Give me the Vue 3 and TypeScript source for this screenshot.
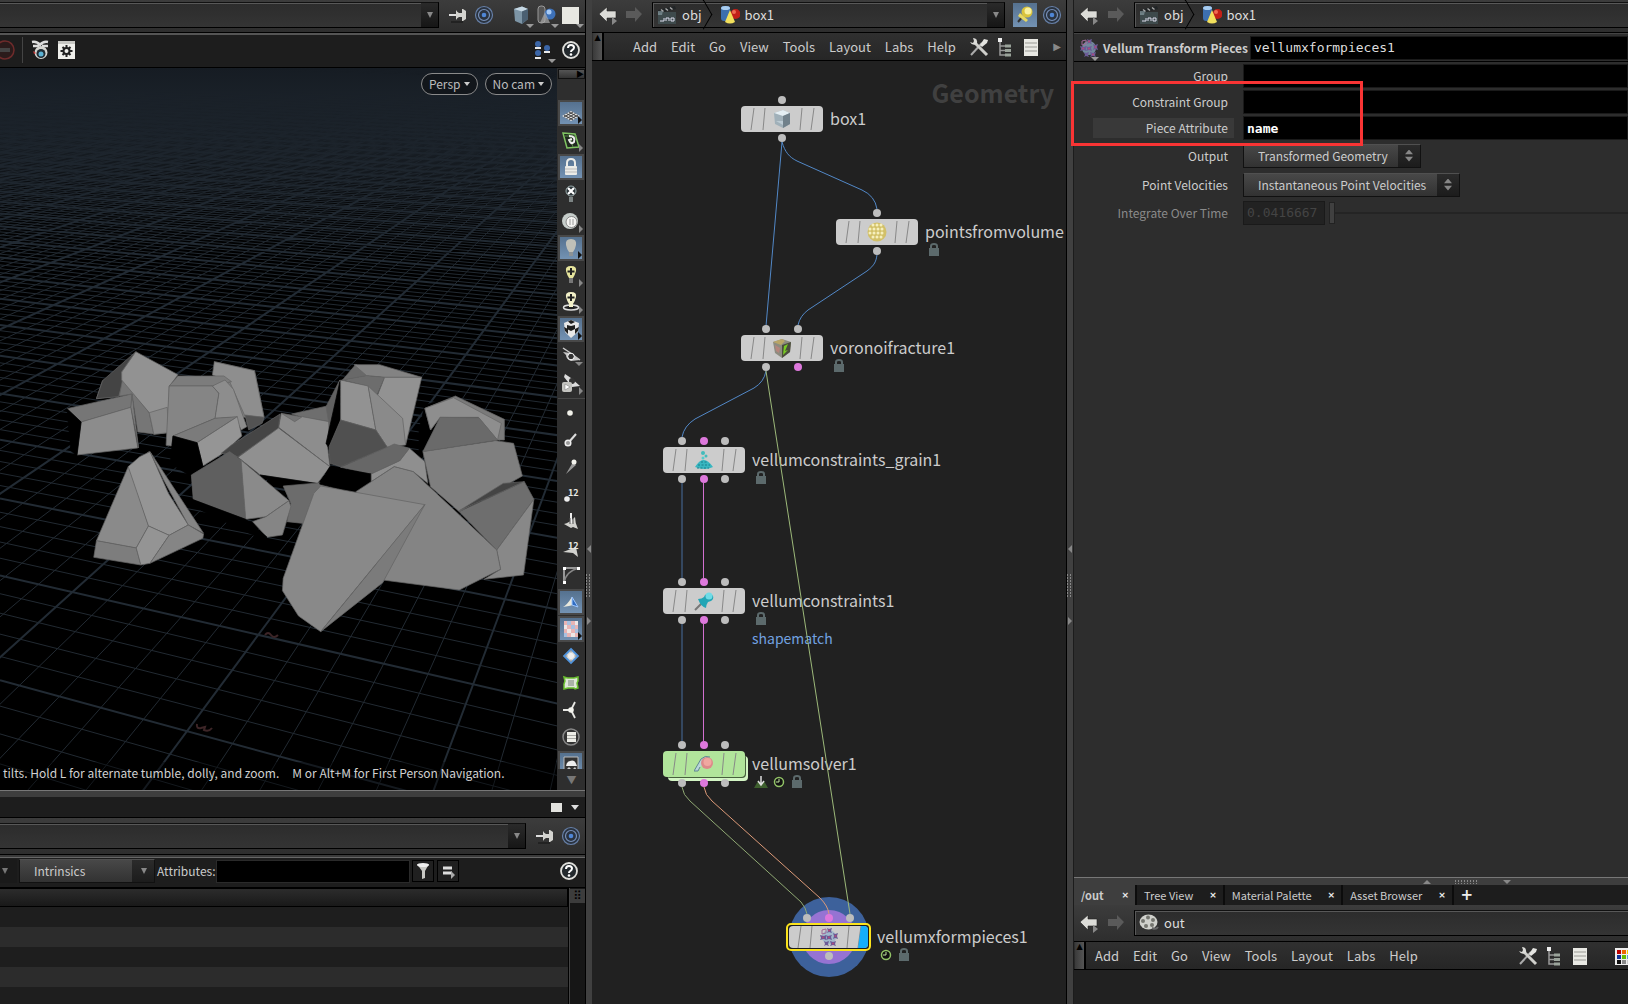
<script setup lang="ts">
import { ref } from 'vue'

interface Tool { icon: string; active?: boolean; more?: 'side' | 'down'; label: string }
interface Port { x: number; y: number; pink?: boolean }
interface NetNode {
  name: string; x: number; y: number; icon: string
  ports: Port[]; badges: string[]; fill?: string; display?: boolean
}

const icons: Record<string, string> = {
  back: '<path d="M1 9 9 2v4h9v7H9v4z" fill="#dcdcd8" stroke="#222" stroke-width=".6"/><path d="m14 12 5 4-5 4z" fill="#888"/>',
  forward: '<path d="M17 9 10 2v4H1v7h9v4z" fill="#5a5a5a"/>',
  clap: '<rect x="1" y="7" width="18" height="12" fill="#3e4a4c"/><path d="m1 5 17-4 1 3L2 8z" fill="#202426"/><path d="m4 4.500 2.500 2M8.500 3.500l2.500 2M13 2.500l2.500 2" stroke="#aaa" stroke-width="1.500"/><path d="M3 16h4v-3M9 16v-3h3v3M14 13h3v3h-3z" stroke="#dde" fill="none"/><path d="M1 6h5l-1 4H1z" fill="#91a6ad" opacity=".6"/>',
  shapes: '<rect x="1" y="1" width="9" height="15" rx="3" fill="#3d6fae"/><ellipse cx="5.500" cy="3" rx="4.500" ry="2" fill="#a9cdf0"/><circle cx="15.500" cy="9" r="5" fill="#c22018"/><circle cx="14" cy="7" r="2" fill="#ee6a52"/><path d="m10 5 5 12q-5 3-10 0z" fill="#f2e05c"/>',
  target: '<circle cx="10" cy="10" r="8.500" fill="#2a3340" stroke="#6780a8" stroke-width="1.200"/><circle cx="10" cy="10" r="5.500" fill="none" stroke="#7890b8" stroke-width="1.200"/><circle cx="10" cy="10" r="2.300" fill="#4f86d6"/>',
  pin: '<path d="M1 10h8" stroke="#ddd" stroke-width="2"/><path d="M8 5q1 2 3 3h3V4h1l3 2v8l-3 2h-1v-4h-3q-2 1-3 3z" fill="#d4d4d0"/><path d="M3 17h12" stroke="#222" stroke-width="2"/>',
  goldpin: '<path d="m3 17 5-6" stroke="#333" stroke-width="2"/><circle cx="12" cy="7" r="5.500" fill="#d9c33c"/><circle cx="13" cy="6" r="3.500" fill="#f8f0a0"/><path d="m5 8 8 7-2 2-8-6z" fill="#e8d860"/>',
  cube: '<path d="m3 4 8-2.500L17 4v10l-6 5-7-3z" fill="#7d95a6"/><path d="m3 4 8-2.500L17 4l-6 2.500z" fill="#c6d8e4"/><path d="m11 6.500 6-2.500v10l-6 5z" fill="#4b6072"/>',
  shade: '<rect x="2" y="1" width="7" height="17" rx="3" fill="#555" stroke="#999"/><circle cx="14" cy="9" r="5.500" fill="#3d71b8"/><circle cx="13" cy="7" r="2.500" fill="#a8cbf5"/><path d="m9 7 5 11H4z" fill="#aaa" opacity=".7"/>',
  white: '<path d="M1 2h17v17H1z" fill="#e8e8e2"/>',
  stop: '<circle cx="10" cy="10" r="9" fill="#2b1b1b" stroke="#6e2b2b" stroke-width="1.500"/><rect x="5" y="8" width="10" height="4" fill="#444"/>',
  bee: '<path d="M1 2q5-1 8 3 3-4 8-3M2 6h6M11 6h6" stroke="#ddd" stroke-width="2.500" fill="none"/><circle cx="10" cy="12.500" r="6.500" fill="#d6d6d2"/><circle cx="10" cy="13.500" r="4.500" fill="#202c33"/><circle cx="10" cy="14" r="2.500" fill="#5cb2d4"/><path d="m2 11 3 2-2 1z" fill="#c33"/>',
  gear: '<rect x="1" y="1" width="17" height="18" fill="#f0f0ec"/><rect x="1" y="1" width="17" height="3" fill="#c8c8c4"/><circle cx="9.500" cy="11" r="3" fill="none" stroke="#222" stroke-width="2"/><path d="M9.500 5v3M9.500 14v3M3.500 11h3M12.500 11h3M5.500 7l2 2M11.500 13l2 2M13.500 7l-2 2M7.500 13l-2 2" stroke="#222" stroke-width="2"/>',
  people: '<g fill="#3b66a8"><circle cx="5" cy="4" r="3"/><circle cx="14" cy="8" r="3"/><circle cx="5" cy="13" r="3"/></g><path d="M2 8h6M11 12h6M2 18h6" stroke="#e8e8e8" stroke-width="2"/>',
  help: '<circle cx="10" cy="10" r="8" fill="#23292d" stroke="#e0e0dc" stroke-width="1.800"/><path d="M7 8q0-3 3-3t3 2.500q0 1.500-1.500 2.300T10 12" fill="none" stroke="#fff" stroke-width="2"/><circle cx="10" cy="14.500" r="1.300" fill="#fff"/>',
  tools: '<path d="M2 18 13 6" stroke="#aaa" stroke-width="2"/><path d="m11 8 4-6 4 1-1 3-5 4z" fill="#e4e4e0"/><path d="m6 6 12 12" stroke="#cfcfcb" stroke-width="3"/><path d="M4 1q5 0 4 6-5 2-7-2l3 1 1-2z" fill="#dcdcd8"/>',
  tree: '<rect x="3" y="1" width="4" height="4" fill="#eee"/><path d="M5 5v13h5M5 9h5M5 13.500h5" stroke="#999" fill="none" stroke-width="1.500"/><path d="M10 9h6M10 13.500h6M10 18h6" stroke="#9aa39a" stroke-width="3"/>',
  list: '<rect x="3" y="2" width="14" height="17" fill="#e9e9e4"/><path d="M4 6h12M4 10h12M4 14h12" stroke="#b4b4ae" stroke-width="1.500"/>',
  palette: '<rect x="1" y="2" width="18" height="17" fill="#eee"/><path d="M3 4h4v4H3z" fill="#b00"/><path d="M8 4h4v4H8z" fill="#e60"/><path d="M13 4h4v4h-4z" fill="#ec0"/><path d="M3 9h4v4H3z" fill="#139"/><path d="M8 9h4v4H8z" fill="#6b0"/><path d="M13 9h4v4h-4z" fill="#69c"/><path d="M3 14h4v4H3z" fill="#111"/><path d="M8 14h4v4H8z" fill="#888"/><path d="M13 14h4v4h-4z" fill="#ccc"/>',
  reel: '<ellipse cx="9.500" cy="9" rx="9" ry="7.500" fill="#cfd0cb"/><g fill="#74756f"><circle cx="9" cy="4.500" r="2"/><circle cx="14" cy="7" r="2"/><circle cx="13" cy="12" r="2"/><circle cx="7" cy="13" r="2"/><circle cx="4" cy="8" r="2"/></g><path d="M13 15q4 2 6-1" stroke="#666" stroke-width="2" fill="none"/>',
  filter: '<path d="M4 3h12l-4 7v7l-3 1v-8z" fill="#c8c8c4"/><ellipse cx="10" cy="4" rx="6" ry="2" fill="#eee"/>',
  menu: '<path d="M5 7h9M5 12h9" stroke="#ddd" stroke-width="3"/><path d="m13 10 4 4-4 4z" fill="#aaa"/>',
  pieces: '<circle cx="10" cy="10" r="7" fill="#8fb0cc" opacity=".7"/><g fill="#6c5a96"><path d="m1 8 4 1 2-1v5l-2-1-4 1 1-2zM8 1l2 1 3-1-1 3 1 2-3-1-2 1 1-2zM14 6l2 1 3-1-1 3 1 3-3-1-2 1 1-3zM7 8l2 1 4-1-1 2 1 3-3-1-3 1 1-2zM5 14l2 1 3-1-1 3 1 2-3-1-2 1 1-2zM11 14l3 1 3-1-1 3 1 2-3-1-3 1 1-2z"/></g><path d="m3 3 4-1v4l-4 1z" fill="none" stroke="#a06a98"/><g fill="#b44a7a"><circle cx="10" cy="3.500" r="1"/><circle cx="16.500" cy="9" r="1"/><circle cx="14" cy="16.500" r="1"/><circle cx="4" cy="10.500" r="1"/><circle cx="10" cy="10.500" r="1"/></g>',
  // network node pictograms
  nbox: '<path d="m2 4 9-3 7 3v11l-7 4-8-4z" fill="#a0b0b9"/><path d="m2 4 9-3 7 3-7 3z" fill="#e4eef3"/><path d="m11 7 7-3v11l-7 4z" fill="#71818b"/><path d="M4 12h7v4z" fill="#bccbd4"/>',
  npoints: '<circle cx="10" cy="10" r="9.500" fill="#d2c068"/><g fill="#f6efbd"><circle cx="6" cy="3" r="1.500"/><circle cx="10" cy="3" r="1.500"/><circle cx="14" cy="3" r="1.500"/><circle cx="3" cy="7" r="1.500"/><circle cx="7" cy="7" r="1.500"/><circle cx="11" cy="7" r="1.500"/><circle cx="15" cy="7" r="1.500"/><circle cx="3" cy="11" r="1.500"/><circle cx="7" cy="11" r="1.500"/><circle cx="11" cy="11" r="1.500"/><circle cx="15" cy="11" r="1.500"/><circle cx="6" cy="15" r="1.500"/><circle cx="10" cy="15" r="1.500"/><circle cx="14" cy="15" r="1.500"/></g>',
  nvoro: '<path d="m1 4 9-3 9 3-1 10-8 6-7-5z" fill="#8d8c80"/><path d="m1 4 9-3 3 2-4 4z" fill="#b9a667"/><path d="m10 7 9-3-1 10-8 6z" fill="#4b4d3c"/><path d="m12 8 4-2-3 7 3-1-5 5z" fill="#77cc22"/><path d="m3 7 5 3-1 5-3-2z" fill="#b5857c"/>',
  ngrain: '<path d="M1 17Q6 9 10 10q4 0 9 7-8 4-18 0z" fill="#38b6c0"/><path d="M4 15h12M7 12h6M3 18h12" stroke="#1a7f8c" stroke-dasharray="2 1.500"/><circle cx="9" cy="3" r="2" fill="#4bb"/><circle cx="12" cy="6" r="1.500" fill="#4bb"/><circle cx="9" cy="8" r="1.500" fill="#5cc"/>',
  npin: '<path d="m1 19 7-7" stroke="#777" stroke-width="2"/><path d="M4 8q4 0 6-2l1-2q5-4 8 1 1 3-2 5l-3 1q-2 3-2 6-5-1-8-9z" fill="#22a5b5"/><circle cx="15" cy="5" r="3.500" fill="#6fdbe6"/>',
  nsolver: '<path d="m0 17 7-12q4-4 8-1l-9 9-2 4z" fill="#b9d6da"/><circle cx="13" cy="9" r="6" fill="#dd8a8a"/><circle cx="13.500" cy="8" r="4" fill="#f0a8a0"/><path d="m0 17 7-12q4-4 9-2M6 13l-2 4H0" fill="none" stroke="#5f8791"/>',
  // display option pictograms
  plane: '<path d="m10 8 9 5-9 5-9-5z" fill="#ddd"/><path d="m5.500 10.500 9 5M14.500 10.500l-9 5M3 12l9 5M8 9l9 5M17 12l-9 5M12 9l-9 5" stroke="#444"/>',
  uv: '<path d="m2 3 12 1 4 13-12 1z" fill="#202820" stroke="#7fc462" stroke-width="1.500"/><path d="M4 6h12M8 4l4 13" stroke="#598846"/><path d="M8 6q7 0 5 6-3 3-5-2l3-1" fill="none" stroke="#eee" stroke-width="2"/>',
  lock: '<path d="M6 9V6q0-4 4-4t4 4v3" fill="none" stroke="#ecece8" stroke-width="2"/><rect x="4" y="9" width="12" height="9" rx="1" fill="#ecece8"/><path d="M4 12h12M4 15h12" stroke="#bbb"/>',
  bulbx: '<circle cx="10" cy="7" r="5" fill="#2c3438" stroke="#9aa"/><path d="m7 4 6 6M13 4l-6 6" stroke="#fff" stroke-width="2.200"/><path d="M8 13h4v5H8z" fill="#7c8484"/>',
  sphere: '<circle cx="9" cy="10" r="8" fill="#c6cdca"/><circle cx="10.500" cy="11" r="5.500" fill="#f4f4f2" stroke="#888"/><path d="M9 8v6M12 8v6" stroke="#999"/>',
  bulb: '<path d="M10 1q6 0 5 6-1 5-3 7H8Q6 12 5 7 4 1 10 1z" fill="#bfc0b8"/><path d="M8 14h4v4H8z" fill="#8b9296"/>',
  bulby: '<path d="M10 1q6 0 5 5-1 4-3 7H8Q6 10 5 6 4 1 10 1z" fill="#e6e49c"/><path d="M10 3v7M6.500 6.500h7" stroke="#222" stroke-width="2"/><path d="M8 13h4v5H8z" fill="#777"/>',
  bulbd: '<ellipse cx="10" cy="15.500" rx="7.500" ry="2.500" fill="#222" stroke="#ddd" stroke-width="1.500"/><path d="M10 0q6 0 5 5-1 4-3 7v3H8v-3Q6 9 5 5 4 0 10 0z" fill="#f2f0c8"/><path d="M10 2v7M6.500 5.500h7" stroke="#222" stroke-width="2"/>',
  checker: '<path d="m3 4 7-3 8 3-1 9-7 6-6-6z" fill="#e8e8e8"/><path d="m7 2.500 3-1.500 4 2-4 2zM3 8l4 2v5l-3-3zM10 7l4-1v4l-4 2zM6 6l4 1v5l-4-2zM14 10l4-2-1 4-3 3z" fill="#1e1e1e"/>',
  goggles: '<path d="m2 2 6 4 11 8" stroke="#ccc" stroke-width="1.500" fill="none"/><path d="m2 6 7 1 10 7-9 1q-5-2-5-6z" fill="#c8c8c8"/><circle cx="10" cy="10.500" r="3.300" fill="#333" stroke="#fff"/>',
  gogbox: '<path d="m4 1 6 4 9 8-8 1q-4-2-4-5L3 4z" fill="#ddd"/><circle cx="11" cy="8" r="3" fill="#333"/><rect x="1" y="9" width="10" height="10" rx="2" fill="#c4c4c0"/><path d="m4 11 5 3-5 3z" fill="#fff" stroke="#777" stroke-width=".5"/>',
  dot: '<circle cx="9" cy="10" r="2.800" fill="#f2f2ea"/>',
  dotline: '<path d="m8 12 7-8" stroke="#ddd" stroke-width="2"/><circle cx="7" cy="13" r="2.800" fill="#999" stroke="#eee" stroke-width="1.500"/>',
  dotvec: '<path d="m5 17 7-12 3 3z" fill="#999"/><circle cx="13" cy="5" r="2.500" fill="#f4f4ee"/>',
  ptnum: '<circle cx="6" cy="15" r="2.800" fill="#eee"/><text x="7" y="12" font-size="9" font-weight="700" fill="#e8e8e4">12</text>',
  prim: '<path d="M3 13q5-1 11-7 0 6 3 12l-5-2-2 1z" fill="#d2d2ce"/><path d="M10 2v10" stroke="#eee" stroke-width="2"/><path d="M9 7v6M12 7v6" stroke="#555"/>',
  primnum: '<path d="m2 14 13-5 2 10-5-4z" fill="#d2d2ce"/><text x="7" y="11" font-size="9" font-weight="700" fill="#e8e8e4">12</text>',
  hull: '<path d="M3 18V3h15" fill="none" stroke="#bbb" stroke-width="1.500"/><path d="M3 18Q5 6 18 3" fill="none" stroke="#888" stroke-width="1.500"/><path d="M2 2h3v3H2zM16 2h3v3h-3zM2 16h3v3H2z" fill="#fff"/>',
  facet: '<path d="M2 15q4-2 9-10l1 8-4 1z" fill="#e8e8dc"/><path d="m11 5 6 10-6-2z" fill="#2f6cc0" stroke="#9cc6ff"/>',
  checks: '<path d="M3 2h14v16H3z" fill="#ece6e6"/><path d="M3 2h3v4H3zM10 2h4v4h-4zM6 6h4v4H6zM14 6h3v4h-3zM3 10h3v4H3zM10 10h4v4h-4zM6 14h4v4H6zM14 14h3v4h-3z" fill="#e8b4b4"/><path d="M6 2h4v4H6zM10 6h4v4h-4zM14 10h3v4h-3zM3 14h3v4H3z" fill="#a8c0e0"/>',
  diamond: '<path d="m10 3 7 7-7 7-7-7z" fill="#d6d6d0" stroke="#4f93dd" stroke-width="1.800"/><path d="M10 4v12M4 10h12" stroke="#888"/><path d="m10 6 4 4-4 4-4-4z" fill="#eee"/>',
  patch: '<path d="M3 4q3 1 4 1h6l4-1v4l-1 2 1 5-3 1-1-1H7l-4 1v-5l1-3z" fill="#dfe6d8" stroke="#6abf2f" stroke-width="1.500"/><path d="M7 7h6v6H7z" fill="#aab2a8"/>',
  axes: '<path d="M2 10h7M10 10l4-8M10 10l4 8" stroke="#e8e8e4" stroke-width="1.800"/><circle cx="10" cy="10" r="2.800" fill="#f4f4ee"/>',
  ring: '<circle cx="10" cy="10" r="8" fill="#333" stroke="#888" stroke-width="1.500"/><rect x="6" y="5" width="9" height="10" fill="#ecece6"/><path d="M6 8.500h9M6 11.500h9" stroke="#a8a8a4"/>',
  image: '<path d="M3 3h14v15H3z" fill="#333" stroke="#bbb"/><path d="M5 12q1-5 4-5 5-2 7 5z" fill="#eee"/><path d="m3 18 5-5 3 3 3-3 3 5z" fill="#ccc"/>',
}

const tools: Tool[] = [
  { icon: 'plane', active: true, more: 'side', label: 'Reference plane' },
  { icon: 'uv', more: 'side', label: 'Construction plane' },
  { icon: 'lock', active: true, label: 'Lock camera' },
  { icon: 'bulbx', label: 'Disable lighting' },
  { icon: 'sphere', more: 'side', label: 'Headlight only' },
  { icon: 'bulb', active: true, more: 'side', label: 'Normal lighting' },
  { icon: 'bulby', more: 'side', label: 'High quality lighting' },
  { icon: 'bulbd', more: 'side', label: 'High quality lighting with shadows' },
  { icon: 'checker', active: true, more: 'side', label: 'Materials' },
  { icon: 'goggles', more: 'down', label: 'Display other objects' },
  { icon: 'gogbox', more: 'side', label: 'Ghost other objects' },
]
const tools2: Tool[] = [
  { icon: 'dot', label: 'Points' },
  { icon: 'dotline', label: 'Point normals' },
  { icon: 'dotvec', label: 'Point trails' },
  { icon: 'ptnum', label: 'Point numbers' },
  { icon: 'prim', label: 'Primitive normals' },
  { icon: 'primnum', label: 'Primitive numbers' },
  { icon: 'hull', label: 'Primitive hulls' },
  { icon: 'facet', active: true, label: 'Shade open curves' },
  { icon: 'checks', active: true, more: 'side', label: 'Backfaces' },
  { icon: 'diamond', label: 'Packed geometry' },
  { icon: 'patch', label: 'Subdivision' },
  { icon: 'axes', label: 'Origin gnomon' },
  { icon: 'ring', label: 'Group list' },
  { icon: 'image', active: true, label: 'Background image' },
]

const menu = ['Add', 'Edit', 'Go', 'View', 'Tools', 'Layout', 'Labs', 'Help']
const tabs = ['Tree View', 'Material Palette', 'Asset Browser']

// Ground grid: both line families run to a vanishing point on the horizon.
const BASE = 664
function gridPath(major: boolean): string {
  const parts: string[] = []
  for (let k = -150; k <= 8; k++) {
    if ((k % 5 === 0) !== major) continue
    const x = 237 + 48.8 * k
    const at = (y: number) => Math.round(728 + ((x - 728) * y) / BASE)
    parts.push(`M${at(60)} -8L${at(800)} 732`)
  }
  for (let k = -6; k <= 260; k++) {
    if ((k % 5 === 0) !== major) continue
    const slope = BASE / (2500 - 60 + 89 * k)
    parts.push(`M0 ${(2500 * slope - 68).toFixed(1)}L700 ${(3200 * slope - 68).toFixed(1)}`)
  }
  return parts.join('')
}
const minorGrid = gridPath(false)
const majorGrid = gridPath(true)

// Fractured rocks, back to front: [fill, outline]
const rocks: [string, string][] = [
  ['#000', '1110,225 1190,200 1130,310 1095,375 1095,300'],
  ['#7e7e7e', '560,95 665,122 690,262 630,262 575,170'],
  ['#8e8e8e', '560,95 665,122 690,262 640,258 600,155 555,135'],
  ['#646464', '318,126 268,152 252,206 345,192'],
  ['#444', '355,65 318,126 320,160 310,200 252,206 268,152'],
  ['#767676', '320,150 390,248 402,312 360,306 345,192 312,198'],
  ['#929292', '355,65 465,134 442,170 440,308 402,313 390,248 318,150 318,126'],
  ['#888', '390,248 437,232 440,308 402,313'],
  ['#767676', '175,236 345,192 342,232 212,276'],
  ['#8c8c8c', '212,276 342,232 360,354 201,375'],
  ['#7c7c7c', '345,192 362,354 352,290 342,232'],
  ['#000', '175,236 212,276 201,377 185,362'],
  ['#7c7c7c', '442,168 465,138 585,138 605,155 555,168'],
  ['#858585', '442,168 555,168 572,190 562,265 452,318 448,348 434,346'],
  ['#8d8d8d', '555,168 588,150 610,178 645,290 630,300 615,262 562,265 572,190'],
  ['#7b7b7b', '562,265 620,260 515,338 452,318'],
  ['#959595', '620,260 632,318 580,372 530,408 515,338'],
  ['#000', '452,318 515,338 530,408 520,440 500,440 445,400'],
  ['#535353', '640,255 690,262 685,280 650,300'],
  ['#6e6e6e', '762,252 870,224 860,275 790,262'],
  ['#747474', '735,250 860,275 855,350 735,290'],
  ['#8d8d8d', '735,250 770,275 790,260 860,275 856,350 862,410 728,292'],
  ['#454545', '732,252 728,295 622,380 578,370 605,345'],
  ['#909090', '728,294 862,410 830,460 680,435 622,382'],
  ['#000', '680,435 835,462 820,468 730,470'],
  ['#6c6c6c', '740,468 870,455 892,478 830,585 750,575 760,520'],
  ['#696969', '930,103 960,137 895,150'],
  ['#838383', '925,104 992,104 1102,142 1005,142 958,137'],
  ['#6d6d6d', '958,137 1005,142 985,195 960,168 895,150'],
  ['#929292', '1005,142 1102,142 1060,345 985,200'],
  ['#616161', '888,150 885,210 862,300 852,230'],
  ['#000', '888,155 890,270 862,360 852,340'],
  ['#929292', '890,150 962,168 982,300 890,270'],
  ['#8a8a8a', '962,168 1052,265 1060,345 1012,352 982,300'],
  ['#505050', '890,270 982,300 1012,352 890,410 862,400 860,350'],
  ['#676767', '1012,352 1030,342 1070,355 1045,392 970,432 890,412'],
  ['#000', '862,410 970,432 972,455 935,485 890,478 835,462'],
  ['#8f8f8f', '1070,355 1110,395 1118,460 1080,425 1030,410 970,455 970,432 1045,392'],
  ['#7a7a7a', '1110,235 1190,198 1318,268 1318,330 1290,330 1250,262 1150,262 1125,300'],
  ['#8e8e8e', '1110,235 1185,203 1310,280 1300,330 1250,262 1150,262 1125,300'],
  ['#6a6a6a', '1150,262 1252,264 1300,330 1105,365'],
  ['#7f7f7f', '1105,365 1295,332 1342,340 1365,438 1200,545 1125,470'],
  ['#444', '1200,542 1315,460 1370,455'],
  ['#6e6e6e', '1370,455 1395,508 1298,660 1200,545'],
  ['#888', '1395,508 1368,735 1265,748 1308,718 1298,660'],
  ['#848484', '1030,410 1080,425 1298,660 1308,718 1200,780 1000,750 930,485'],
  ['#898989', '838,468 1110,524 838,905 780,858 738,782 740,745 820,490'],
  ['#7b7b7b', '1110,524 1000,758 838,905'],
  ['#5f5f5f', '600,365 630,390 642,568 505,508 500,435'],
  ['#8a8a8a', '630,390 755,512 695,560 642,568'],
  ['#858585', '755,512 760,530 738,615 698,622 660,575 695,560'],
  ['#000', '502,508 642,568 698,622 685,628 505,530'],
  ['#8a8a8a', '390,365 335,410 252,632 356,654 388,588 338,412'],
  ['#959595', '335,410 365,380 392,365 440,490 492,585 442,616 388,588'],
  ['#858585', '392,365 532,610 492,585 430,455'],
  ['#7d7d7d', '252,632 356,654 368,705 245,682'],
  ['#949494', '388,588 442,616 392,700 368,705 356,654'],
  ['#858585', '442,616 492,585 532,612 530,625 392,700'],
]

const three = (y: number): Port[] => [
  { x: 682, y }, { x: 704, y, pink: true }, { x: 725, y },
]
const nodes: NetNode[] = [
  { name: 'box1', x: 782, y: 119, icon: 'nbox', ports: [{ x: 782, y: 100 }, { x: 782, y: 138 }], badges: [] },
  { name: 'pointsfromvolume', x: 877, y: 232, icon: 'npoints', ports: [{ x: 877, y: 213 }, { x: 877, y: 251 }], badges: ['lock'] },
  { name: 'voronoifracture1', x: 782, y: 348, icon: 'nvoro', ports: [{ x: 766, y: 329 }, { x: 798, y: 329 }, { x: 766, y: 367 }, { x: 798, y: 367, pink: true }], badges: ['lock'] },
  { name: 'vellumconstraints_grain1', x: 704, y: 460, icon: 'ngrain', ports: [...three(441), ...three(479)], badges: ['lock'] },
  { name: 'vellumconstraints1', x: 704, y: 601, icon: 'npin', ports: [...three(582), ...three(620)], badges: ['lock'] },
  { name: 'vellumsolver1', x: 704, y: 764, icon: 'nsolver', ports: [...three(745), ...three(783)], badges: ['save', 'clock', 'lock'], fill: '#b1e59b' },
  { name: 'vellumxformpieces1', x: 829, y: 937, icon: 'pieces', ports: [{ x: 807, y: 918 }, { x: 829, y: 918, pink: true }, { x: 850, y: 918 }, { x: 829, y: 956 }], badges: ['clock', 'lock'], display: true },
]
const wires: [string, string][] = [
  ['#5288c7', 'M782 142 766 326'],
  ['#5288c7', 'M782 142C785 152 789 157 797 161L862 190Q875 196 877 209'],
  ['#5288c7', 'M877 255C876 261 875 265 867 271L808 310Q800 316 798 325'],
  ['#5288c7', 'M766 371Q764 382 754 388L695 419Q684 426 682 437'],
  ['#9db97a', 'M766 371 850 914'],
  ['#486f9f', 'M682 483V578'], ['#d26fd0', 'M703.500 483V578'],
  ['#486f9f', 'M682 624V741'], ['#d26fd0', 'M703.500 624V741'],
  ['#8fa873', 'M682 787Q683 795 690 801L801 902Q806 908 807 914'],
  ['#dc9a78', 'M704 787Q705 795 712 801L820 898Q828 906 829 914'],
]

const nodeName = ref('vellumxformpieces1')
const group = ref('')
const constraintGroup = ref('')
const pieceAttribute = ref('name')
const attributeFilter = ref('')
</script>

<template>
  <div class="desktop">
    <section class="col left">
      <header class="bar">
        <div class="field flush"><span class="grow"></span><button class="drop" aria-label="Path history"></button></div>
        <svg class="ic" v-html="icons.pin" />
        <svg class="ic" v-html="icons.target" />
        <div class="trio">
          <button class="ib down" aria-label="Object type"><svg class="ic" v-html="icons.cube" /></button>
          <button class="ib down" aria-label="Shading"><svg class="ic" v-html="icons.shade" /></button>
          <button class="ib down" aria-label="Background"><svg class="ic" v-html="icons.white" /></button>
        </div>
      </header>
      <div class="viewbar">
        <svg class="ic cut" v-html="icons.stop" />
        <i class="rule"></i>
        <svg class="ic" v-html="icons.bee" />
        <svg class="ic" v-html="icons.gear" />
        <span class="grow"></span>
        <button class="ib down" aria-label="Layouts"><svg class="ic" v-html="icons.people" /></button>
        <button class="ib" aria-label="Viewport help"><svg class="ic" v-html="icons.help" /></button>
      </div>
      <div class="viewer">
        <div class="scene">
          <svg class="scene-art">
            <defs>
              <linearGradient id="haze" x1="0" y1="0" x2="0" y2="1">
                <stop offset="0" stop-color="#161c23" />
                <stop offset=".15" stop-color="#161c23" stop-opacity=".7" />
                <stop offset="1" stop-color="#161c23" stop-opacity="0" />
              </linearGradient>
            </defs>
            <path :d="minorGrid" stroke="#222a32" fill="none" />
            <path :d="majorGrid" stroke="#222b34" stroke-width="2" fill="none" />
            <rect width="100%" height="190" fill="url(#haze)" />
            <g fill="none" stroke="#3d2527" stroke-width="2">
              <path d="M265 567q3-4 6 0t7 0" />
              <path d="M197 656q-1 5 4 4l4-1-1 3q5 2 8-2" />
            </g>
            <g transform="translate(0 262) scale(.3827 .3333)" stroke-width="2" stroke-linejoin="round">
              <polygon v-for="(r, i) in rocks" :key="i" :points="r[1]" :fill="r[0]" :stroke="r[0] === '#000' ? '#000' : '#646464'" />
            </g>
          </svg>
          <div class="pills">
            <button class="pill">Persp<i></i></button>
            <button class="pill">No cam<i></i></button>
          </div>
          <p class="hint"><span>tilts. Hold L for alternate tumble, dolly, and zoom.</span><span>M or Alt+M for First Person Navigation.</span></p>
        </div>
        <aside class="strip">
          <button class="strip-top" aria-label="Collapse">▶</button>
          <div class="strip-list">
            <button v-for="t in tools" :key="t.icon" class="tool" :class="[{ active: t.active }, t.more]" :aria-label="t.label">
              <svg class="ic" v-html="icons[t.icon]" />
            </button>
            <hr>
            <button v-for="t in tools2" :key="t.icon" class="tool" :class="[{ active: t.active }, t.more]" :aria-label="t.label">
              <svg class="ic" v-html="icons[t.icon]" />
            </button>
          </div>
          <button class="strip-end" aria-label="More">▼</button>
        </aside>
      </div>
      <div class="hsplit"></div>
      <div class="sheet">
        <div class="sheet-tabs"><i class="max"></i><i class="tri"></i></div>
        <div class="sheet-path">
          <div class="field flush"><span class="grow"></span><button class="drop" aria-label="Path history"></button></div>
          <svg class="ic" v-html="icons.pin" />
          <svg class="ic" v-html="icons.target" />
        </div>
        <div class="sheet-bar">
          <button class="stub" aria-label="View"></button>
          <span class="pick intr"><select aria-label="Intrinsics"><option>Intrinsics</option></select></span>
          <label for="attrs">Attributes:</label>
          <input id="attrs" v-model="attributeFilter" type="text">
          <button class="sq" aria-label="Filter"><svg class="ic" v-html="icons.filter" /></button>
          <button class="sq" aria-label="Options"><svg class="ic" v-html="icons.menu" /></button>
          <span class="grow"></span>
          <button class="ib" aria-label="Spreadsheet help"><svg class="ic" v-html="icons.help" /></button>
        </div>
        <div class="sheet-body">
          <div class="rows"><div class="head"></div><div class="stripes"></div></div>
          <div class="scroll"><i>⠿</i></div>
        </div>
      </div>
    </section>

    <div class="vsplit"><i class="l"></i><i class="dots"></i><i class="r"></i></div>

    <section class="col mid">
      <header class="bar">
        <button class="ib nav" aria-label="Back"><svg class="ic" v-html="icons.back" /></button>
        <button class="ib nav" aria-label="Forward"><svg class="ic" v-html="icons.forward" /></button>
        <div class="field">
          <svg class="ic" v-html="icons.clap" /><a href="#obj">obj</a><i class="chev"></i>
          <svg class="ic" v-html="icons.shapes" /><a href="#box1">box1</a>
          <span class="grow"></span><button class="drop" aria-label="Path history"></button>
        </div>
        <button class="ib pinned" aria-label="Pinned"><svg class="ic" v-html="icons.goldpin" /></button>
        <svg class="ic" v-html="icons.target" />
      </header>
      <nav class="menubar">
        <i class="thumb">▲</i>
        <div class="menus first"><button v-for="m in menu" :key="m">{{ m }}</button></div>
        <div class="menu-icons">
          <svg class="ic" v-html="icons.tools" /><svg class="ic" v-html="icons.tree" /><svg class="ic" v-html="icons.list" />
        </div>
        <span class="grow"></span><span class="next">▶</span>
      </nav>
      <div class="network">
        <span class="context">Geometry</span>
        <svg class="net-art">
          <g transform="translate(-592 -61)">
            <circle cx="829" cy="937" r="40" fill="#3d619b" />
            <circle cx="829" cy="937" r="27" fill="#9673d3" />
            <g v-for="n in nodes" :key="n.name">
              <rect v-if="n.fill" :x="n.x - 36" :y="n.y - 8" width="80" height="25" rx="4" fill="#d3f5c4" />
              <rect v-if="n.fill" :x="n.x - 38" :y="n.y - 10" width="80" height="24" rx="4" fill="#46603c" />
              <rect v-if="n.display" :x="n.x - 42" :y="n.y - 13" width="83" height="26" rx="4" fill="#1c1c1c" stroke="#fbe31d" stroke-width="2" />
              <rect :x="n.x - (n.display ? 40 : 41)" :y="n.y - (n.display ? 11 : 13)" :width="n.display ? 79 : 82" :height="n.display ? 22 : 26" rx="4" :fill="n.fill || '#ccc'" />
              <path :transform="`translate(${n.x} ${n.y})`" d="m-28-11-3 22M-17-11l-2 22M20-11l-2 22M32-11l-3 22" stroke="#888" fill="none" />
              <path v-if="n.display" :transform="`translate(${n.x} ${n.y})`" d="M32-11h3q4 0 4 4V7q0 4-4 4h-6z" fill="#14aefa" />
              <svg :x="n.x - 10" :y="n.y - 10" width="20" height="20" v-html="icons[n.icon]" />
              <text :x="n.x + 48" :y="n.y + 6" class="node-name">{{ n.name }}</text>
              <g v-for="(b, i) in n.badges" :key="b" :transform="`translate(${n.x + 57 + i * 18} ${n.y + 18})`">
                <g v-if="b === 'lock'"><rect x="-5" y="-2" width="10" height="8" fill="#5c6a6c" /><path d="M-3-2v-2q0-2 3-2t3 2v2" fill="none" stroke="#5c6a6c" stroke-width="2" /></g>
                <g v-else-if="b === 'clock'"><circle r="4.500" fill="#111" stroke="#92c366" stroke-width="1.500" /><path d="M0-3V0h-3" stroke="#c4e6a4" fill="none" /></g>
                <g v-else><path d="m-7 6 4-7 3 3 3-3 4 7z" fill="#3e5f2e" /><path d="M0-6v8M-3-1l3 4 3-4" fill="none" stroke="#ddd" stroke-width="1.500" /></g>
              </g>
            </g>
            <text x="752" y="644" class="node-note">shapematch</text>
            <path v-for="(w, i) in wires" :key="i" :d="w[1]" :stroke="w[0]" fill="none" />
            <template v-for="n in nodes" :key="n.name">
              <circle v-for="(p, i) in n.ports" :key="i" :cx="p.x" :cy="p.y" r="4" :fill="p.pink ? '#dd78dc' : '#bdbdbd'" />
            </template>
          </g>
        </svg>
      </div>
    </section>

    <div class="vsplit"><i class="l"></i><i class="dots"></i><i class="r"></i></div>

    <section class="col right">
      <header class="bar">
        <button class="ib nav" aria-label="Back"><svg class="ic" v-html="icons.back" /></button>
        <button class="ib nav" aria-label="Forward"><svg class="ic" v-html="icons.forward" /></button>
        <div class="field open">
          <svg class="ic" v-html="icons.clap" /><a href="#obj">obj</a><i class="chev"></i>
          <svg class="ic" v-html="icons.shapes" /><a href="#box1">box1</a>
        </div>
      </header>
      <div class="title">
        <button class="ib down" aria-label="Node menu"><svg class="ic" v-html="icons.pieces" /></button>
        <label for="node">Vellum Transform Pieces</label>
        <input id="node" v-model="nodeName" type="text">
      </div>
      <form class="params" @submit.prevent>
        <div class="param"><label for="grp">Group</label><input id="grp" v-model="group" type="text"></div>
        <div class="param"><label for="cgrp">Constraint Group</label><input id="cgrp" v-model="constraintGroup" type="text"></div>
        <div class="param"><label for="piece" class="lit">Piece Attribute</label><input id="piece" v-model="pieceAttribute" class="set" type="text"></div>
        <div class="param tall"><label for="output">Output</label><span class="pick spin out"><select id="output"><option>Transformed Geometry</option></select></span></div>
        <div class="param tall"><label for="vel">Point Velocities</label><span class="pick spin vel"><select id="vel"><option>Instantaneous Point Velocities</option></select></span></div>
        <div class="param tall off"><label for="time">Integrate Over Time</label><input id="time" type="text" value="0.0416667" disabled><input class="slide" type="range" min="0" max="1" value="0" disabled aria-label="Integrate Over Time"></div>
        <div class="mark"></div>
      </form>
      <div class="hsplit grip"><i class="up"></i><i class="dots"></i><i class="dn"></i></div>
      <div class="tabs">
        <button class="tab on">/out<b>×</b></button>
        <button v-for="t in tabs" :key="t" class="tab">{{ t }}<b>×</b></button>
        <button class="add" aria-label="New tab">+</button>
      </div>
      <div class="bar low">
        <button class="ib nav" aria-label="Back"><svg class="ic" v-html="icons.back" /></button>
        <button class="ib nav" aria-label="Forward"><svg class="ic" v-html="icons.forward" /></button>
        <div class="field open"><svg class="ic" v-html="icons.reel" /><a href="#out">out</a></div>
      </div>
      <nav class="menubar">
        <i class="thumb">▲</i>
        <div class="menus"><button v-for="m in menu" :key="m">{{ m }}</button></div>
        <span class="grow"></span>
        <div class="menu-icons">
          <svg class="ic" v-html="icons.tools" /><svg class="ic" v-html="icons.tree" /><svg class="ic" v-html="icons.list" />
        </div>
        <svg class="ic swatches" v-html="icons.palette" />
      </nav>
      <div class="outnet"></div>
    </section>
  </div>
</template>

<style>
html, body { margin: 0; background: #222; }
</style>

<style scoped>
.desktop {
  display: grid; grid-template-columns: minmax(0, 586fr) 6px minmax(0, 475fr) 6px minmax(0, 555fr);
  height: 100vh; overflow: hidden; background: #2d2d2d; color: #ccc;
  font: 12px/20px "Noto Sans CJK SC", "Noto Sans", sans-serif;
}
.desktop *, .desktop *::before, .desktop *::after { box-sizing: border-box; }
button, input, select { font: inherit; color: inherit; margin: 0; padding: 0; border: 0; background: none; border-radius: 0; }
a { color: #ddd; text-decoration: none; font-size: 13px; }
.grow { flex: 1; }
.ic { width: 20px; height: 20px; flex: none; display: block; }
.col { display: flex; flex-direction: column; min-width: 0; height: 100vh; position: relative; }
.left, .mid { border-right: 1px solid #000; }
.bar { display: flex; align-items: center; height: 33px; flex: none; background: linear-gradient(#3c3c3c, #2e2e2e); border-bottom: 1px solid #000; padding-bottom: 3px; }
.field {
  flex: 1; display: flex; align-items: center; height: 26px; min-width: 0;
  background: linear-gradient(#2c2c2c, #343434); border: 1px solid #000; border-top-color: #111; box-shadow: inset 1px 1px #585858; padding-left: 4px;
}
.field.flush { border-left: 0; box-shadow: inset 0 1px #585858; }
.field.open { border-right: 0; }
.field a { margin-left: 5px; }
.drop { width: 17px; height: 24px; background: linear-gradient(#2a2a2a, #161616); display: flex; align-items: center; justify-content: center; }
.drop::after { content: ""; border: 3px solid transparent; border-top: 6px solid #888; border-bottom: 0; }
.chev { width: 17px; height: 17px; margin: 0 8px 0 -7px; border: solid #000; border-width: 1px 1px 0 0; transform: rotate(45deg) skew(15deg, 15deg); }
.ib { position: relative; flex: none; width: 20px; height: 20px; }
.ib.down::after { content: ""; position: absolute; right: -3px; bottom: -3px; border: 4px solid transparent; border-top: 4px solid #999; border-bottom: 0; }

.left .bar { padding-right: 4px; }
.left .bar .field { margin-right: 9px; }
.left .bar > .ic { margin-right: 6px; }
.trio { display: flex; gap: 5px; margin-left: 11px; }
.viewbar { display: flex; align-items: center; height: 35px; flex: none; background: #1d1d1d; border-top: 2px solid #555; border-bottom: 1px solid #000; gap: 6px; padding: 0 4px 2px 0; }
.viewbar .cut { margin-left: -5px; }
.viewbar .rule { width: 1px; height: 26px; background: #444; margin: 0 2px 0 1px; }
.viewbar .ib { margin-left: 2px; }
.viewer { flex: 1; display: flex; min-height: 0; }
.scene { position: relative; flex: 1; background: #000; overflow: hidden; }
.scene-art, .net-art { position: absolute; inset: 0; width: 100%; height: 100%; }
.pills { position: absolute; top: 5px; right: 5px; display: flex; gap: 7px; }
.pill { height: 22px; border: 1px solid #8a8a8a; border-radius: 11px; padding: 0 7px; font-size: 12px; line-height: 18px; color: #bbb; background: #12161b; display: flex; align-items: center; gap: 3px; }
.pill i { border: 3px solid transparent; border-top: 4px solid #ccc; border-bottom: 0; }
.hint { position: absolute; left: 0; right: 0; bottom: 0; height: 28px; margin: 0; padding: 2px 3px; background: rgba(0, 0, 0, .4); color: #d0d0d0; white-space: nowrap; display: flex; gap: 13px; line-height: 18px; }
.strip { width: 28px; background: #2e2e2e; display: flex; flex-direction: column; overflow: hidden; padding: 1px 0 0 1px; }
.strip-top { height: 10px; flex: none; line-height: 8px; font-size: 8px; text-align: right; color: #000; background: linear-gradient(#555, #333); border: 1px solid #111; }
.strip-list { flex: 1; min-height: 0; overflow: hidden; margin-top: 21px; }
.strip-list hr { margin: 2px 0 1px; border: 0; border-top: 1px solid #484848; }
.tool { display: flex; align-items: center; justify-content: center; width: 26px; height: 26px; margin-bottom: 1px; position: relative; border: 1px solid transparent; }
.tool.active { background: linear-gradient(#55718f, #7392b3); border: 2px solid #484848; }
.tool.side::after { content: ""; position: absolute; right: 0; bottom: 0; border: 4px solid transparent; border-left: 4px solid #888; border-right: 0; }
.tool.active.side::after { border-left-color: #111; }
.tool.down::after { content: ""; position: absolute; right: 0; bottom: 2px; border: 4px solid transparent; border-top: 4px solid #888; border-bottom: 0; }
.strip-end { height: 21px; flex: none; font-size: 10px; color: #777; }
.hsplit { height: 7px; flex: none; background: #3e3e3e; border-top: 1px solid #777; }
.sheet { height: 207px; flex: none; display: flex; flex-direction: column; background: #1d1d1d; }
.sheet-tabs { height: 21px; flex: none; border-bottom: 1px solid #000; display: flex; align-items: center; justify-content: flex-end; gap: 9px; padding-right: 6px; }
.max { width: 11px; height: 9px; background: #e2e2de; }
.tri { border: 4px solid transparent; border-top: 5px solid #ddd; border-bottom: 0; }
.sheet-path { height: 37px; flex: none; display: flex; align-items: center; background: linear-gradient(#3c3c3c, #2e2e2e); border-bottom: 1px solid #000; gap: 6px; padding-right: 4px; }
.sheet-path .field { margin-right: 3px; }
.sheet-bar { height: 33px; flex: none; display: flex; align-items: center; border-top: 2px solid #3a3a3a; box-shadow: inset 0 1px #666; border-bottom: 1px solid #000; padding: 0 6px 2px 0; }
.stub { width: 17px; height: 24px; background: #1a1a1a; display: flex; align-items: center; }
.stub::after { content: ""; margin-left: 2px; border: 3px solid transparent; border-top: 6px solid #777; border-bottom: 0; }
.pick { position: relative; display: block; height: 24px; background: linear-gradient(#484848, #323232); border: 1px solid #111; border-top-color: #505050; }
.pick select { appearance: none; width: 100%; height: 22px; line-height: 20px; padding-left: 14px; outline: 0; }
.pick::before { content: ""; position: absolute; right: 0; top: 0; bottom: 0; width: 22px; background: linear-gradient(#2b2b2b, #1c1c1c); }
.pick::after { content: ""; position: absolute; right: 7px; top: 8px; border: 3px solid transparent; border-top: 6px solid #888; border-bottom: 0; pointer-events: none; }
.intr { width: 136px; margin: 0 2px; }
.sheet-bar input { width: 194px; height: 23px; margin: 0 2px 0 0; background: #000; border: 1px solid #2a2a2a; }
.sq { width: 22px; height: 22px; margin-right: 3px; border: 1px solid #000; background: #202020; }
.sheet-body { flex: 1; display: flex; min-height: 0; }
.rows { flex: 1; display: flex; flex-direction: column; border-right: 1px solid #000; }
.head { height: 19px; background: linear-gradient(#2c2c2c, #191919); border: 1px solid #000; border-left: 0; }
.stripes { flex: 1; background: repeating-linear-gradient(#1e1e1e 0 20px, #2c2c2c 20px 40px); }
.scroll { width: 16px; background: #161616; border-left: 1px solid #444; }
.scroll i { display: block; height: 14px; margin-top: 1px; background: #3c3c3c; color: #000; font: 12px/14px "DejaVu Sans", sans-serif; text-align: center; overflow: hidden; }

.vsplit { background: #404040; display: flex; flex-direction: column; align-items: center; justify-content: center; gap: 20px; padding-top: 166px; }
.vsplit .l { border: 4px solid transparent; border-right: 4px solid #888; border-left: 0; }
.vsplit .r { border: 4px solid transparent; border-left: 4px solid #888; border-right: 0; }
.dots { width: 6px; height: 24px; background: repeating-linear-gradient(#404040 0 1px, transparent 1px 3px), repeating-linear-gradient(90deg, #888 0 1px, #404040 1px 3px); }

.mid { background: #222; }
.nav { margin-left: 6px; }
.nav + .nav { margin-left: 7px; }
.nav + .field { margin-left: 7px; }
.pinned { width: 24px; height: 24px; margin: 0 5px 0 8px; padding: 2px; background: linear-gradient(#55718f, #7392b3); }
.mid .bar { padding-right: 4px; }
.menubar { display: flex; align-items: center; height: 28px; flex: none; background: linear-gradient(#303030, #262626); border-bottom: 1px solid #000; }
.thumb { width: 11px; height: 27px; margin-left: 1px; font: 8px/10px "DejaVu Sans", sans-serif; text-align: center; color: #000; background: linear-gradient(90deg, #3a3a3a, #555); border-right: 2px solid #000; }
.menus { display: flex; gap: 14px; margin-left: 9px; font-size: 13px; }
.menus.first { margin-left: 29px; }
.menus button { line-height: 26px; }
.menu-icons { display: flex; gap: 6px; margin-left: 13px; }
.next { color: #888; font: 10px/20px "DejaVu Sans", sans-serif; margin-right: 5px; }
.network { flex: 1; position: relative; overflow: hidden; background: #212121; }
.context { position: absolute; right: 12px; top: 13px; font-size: 25px; line-height: 36px; font-weight: 700; color: #404040; }
.node-name { font-size: 16px; fill: #ccc; }
.node-note { font-size: 14px; fill: #72a2e0; }

.right { border-left: 1px solid #1c1c1c; }
.right .nav { margin-left: 5px; }
.right .nav + .nav { margin-left: 8px; }
.right .nav + .field { margin-left: 7px; }
.title { height: 29px; flex: none; display: flex; align-items: center; border-top: 1px solid #444; border-bottom: 1px solid #000; padding-left: 5px; }
.title .ib.down::after { right: 0; }
.title label { margin: 0 2px 0 4px; font-weight: 700; white-space: nowrap; }
input[type=text] { font-family: "DejaVu Sans Mono", monospace; font-size: 13px; }
.title input { flex: 1; min-width: 0; height: 24px; background: #000; border: 1px solid #1a1a1a; padding-left: 3px; color: #ddd; }
.params { flex: 1; min-height: 0; position: relative; padding-top: 1px; }
.param { display: flex; align-items: center; height: 26px; }
.param label { width: 141px; margin: 0 9px 0 19px; padding-right: 6px; text-align: right; white-space: nowrap; flex: none; }
.param label.lit { background: #393939; }
.param input[type=text] { flex: 1; min-width: 0; height: 24px; background: #000; border: 1px solid #1a1a1a; padding-left: 3px; }
.param input.set { font-weight: 700; color: #fff; }
.param.tall { height: 29px; }
.spin::after { top: 5px; border: 0; width: 8px; height: 12px; background: #888; clip-path: polygon(50% 0, 100% 40%, 0 40%, 0 60%, 100% 60%, 50% 100%, 0 60%, 0 40%); }
.out { width: 178px; }
.vel { width: 217px; }
.param.off { height: 27px; }
.param.off label { color: #8a8a8a; }
.param.off input[type=text] { flex: none; width: 82px; background: #222; color: #444; }
.slide { appearance: none; flex: 1; min-width: 0; height: 22px; margin-left: 4px; background: linear-gradient(#242424, #242424) 0 50% / 100% 2px no-repeat; }
.slide::-webkit-slider-thumb { appearance: none; width: 6px; height: 22px; background: #404040; border: 1px solid #222; }
.mark { position: absolute; left: -3px; top: 19px; width: 292px; height: 65px; border: 3px solid #f93434; pointer-events: none; }
.grip { display: flex; align-items: center; justify-content: center; gap: 24px; height: 8px; padding-left: 232px; }
.grip .dots { width: 24px; height: 5px; }
.up { border: 4px solid transparent; border-bottom: 4px solid #888; border-top: 0; }
.dn { border: 4px solid transparent; border-top: 4px solid #888; border-bottom: 0; }
.tabs { display: flex; height: 20px; flex: none; background: #1d1d1d; font-size: 11px; }
.tab { display: flex; align-items: center; gap: 16px; height: 20px; padding: 0 6px 0 7px; border-right: 2px solid #0c0c0c; white-space: nowrap; line-height: 18px; }
.tab b { font: 700 9px/18px "DejaVu Sans", sans-serif; color: #eee; }
.tab.on { background: #3e3e3e; font-weight: 700; gap: 18px; }
.add { width: 26px; font: 700 15px/18px "DejaVu Sans", sans-serif; color: #eee; }
.low { height: 37px; padding-bottom: 0; }
.right .menubar .menu-icons { margin-left: 0; }
.swatches { margin: 0 -6px 0 24px; }
.outnet { height: 34px; flex: none; background: #212121; }
</style>
